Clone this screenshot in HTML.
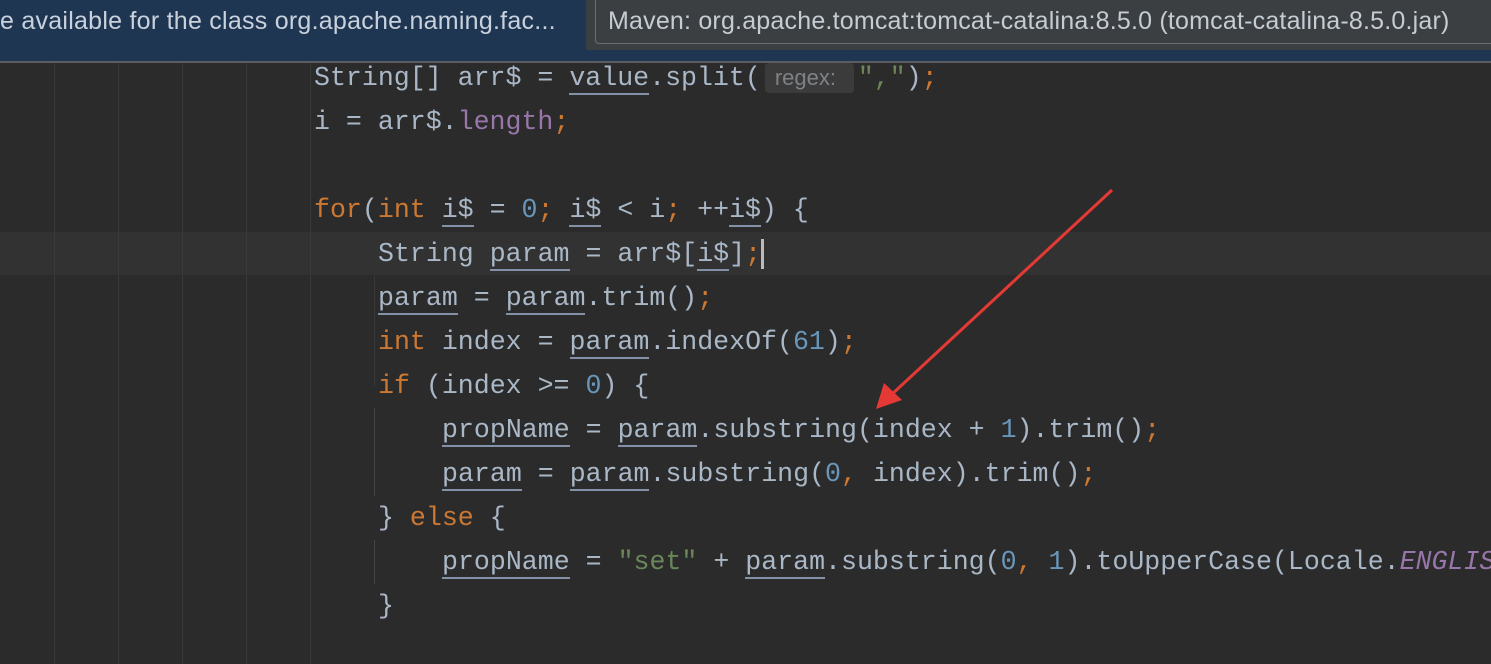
<!DOCTYPE html><html><head><style>
body{margin:0;width:1491px;height:664px;background:#2b2b2b;overflow:hidden;position:relative;font-family:"Liberation Mono",monospace}
.top{position:absolute;left:0;top:0;width:1491px;height:61px;background:#1f3653;border-bottom:2px solid #5a5d60}
.t1{position:absolute;left:0;top:7px;font:25px "Liberation Sans",sans-serif;color:#c9d2dc;white-space:nowrap;letter-spacing:0.25px}
.tip{position:absolute;left:586px;top:0;width:905px;height:50px;background:#3c3f41}
.tipb{position:absolute;left:595px;top:0;width:896px;height:43px;border:1px solid #6b6e70;border-top:none;border-right:none;border-radius:0 0 0 4px}
.t2{position:absolute;left:608px;top:7px;font:25px "Liberation Sans",sans-serif;color:#c4ccd4;white-space:nowrap;letter-spacing:0.2px}
.g{position:absolute;top:63px;bottom:0;width:1px;background:#393939}
.cur{position:absolute;left:0;top:232px;width:1491px;height:43px;background:#323232}
.l{position:absolute;font-size:26.6px;color:#a9b7c6;white-space:pre;line-height:44px;height:44px}
.k{color:#cc7832}.n{color:#6897bb}.s{color:#6a8759}.f{color:#9876aa}.fi{color:#9876aa;font-style:italic}
u{text-decoration:none;border-bottom:2px solid #8290a8;display:inline-block;line-height:30px}
.hint{background:#3b3b3b;color:#7e8287;font-family:"Liberation Sans",sans-serif;font-size:22px;border-radius:4px;padding:0 10px;margin:0 4px 0 4px;display:inline-block;line-height:30px;width:69px}
</style></head><body>
<div class="top"></div>
<div class="t1">e available for the class org.apache.naming.fac...</div>
<div class="tip"></div><div class="tipb"></div>
<div class="t2">Maven: org.apache.tomcat:tomcat-catalina:8.5.0 (tomcat-catalina-8.5.0.jar)</div>
<div class="cur"></div>
<div class="g" style="left:54px"></div><div class="g" style="left:118px"></div><div class="g" style="left:182px"></div><div class="g" style="left:246px"></div><div class="g" style="left:310px"></div>
<div class="g" style="left:374px;top:276px;bottom:auto;height:110px"></div>
<div class="g" style="left:374px;top:408px;bottom:auto;height:88px;background:#444"></div>
<div class="g" style="left:374px;top:540px;bottom:auto;height:44px;background:#444"></div>
<div class="l" style="left:314px;top:56px">String[] arr$ = <u>value</u>.split(<span class="hint">regex:</span><span class="s">","</span>)<span class="k">;</span></div>
<div class="l" style="left:314px;top:100px">i = arr$.<span class="f">length</span><span class="k">;</span></div>
<div class="l" style="left:314px;top:188px"><span class="k">for</span>(<span class="k">int</span> <u>i$</u> = <span class="n">0</span><span class="k">;</span> <u>i$</u> &lt; i<span class="k">;</span> ++<u>i$</u>) {</div>
<div class="l" style="left:378px;top:232px">String <u>param</u> = arr$[<u>i$</u>]<span class="k">;</span><span style="display:inline-block;width:3px;height:30px;background:#bbb;vertical-align:middle"></span></div>
<div class="l" style="left:378px;top:276px"><u>param</u> = <u>param</u>.trim()<span class="k">;</span></div>
<div class="l" style="left:378px;top:320px"><span class="k">int</span> index = <u>param</u>.indexOf(<span class="n">61</span>)<span class="k">;</span></div>
<div class="l" style="left:378px;top:364px"><span class="k">if</span> (index &gt;= <span class="n">0</span>) {</div>
<div class="l" style="left:442px;top:408px"><u>propName</u> = <u>param</u>.substring(index + <span class="n">1</span>).trim()<span class="k">;</span></div>
<div class="l" style="left:442px;top:452px"><u>param</u> = <u>param</u>.substring(<span class="n">0</span><span class="k">,</span> index).trim()<span class="k">;</span></div>
<div class="l" style="left:378px;top:496px">} <span class="k">else</span> {</div>
<div class="l" style="left:442px;top:540px"><u>propName</u> = <span class="s">"set"</span> + <u>param</u>.substring(<span class="n">0</span><span class="k">,</span> <span class="n">1</span>).toUpperCase(Locale.<span class="fi">ENGLISH</span></div>
<div class="l" style="left:378px;top:584px">}</div>
<svg style="position:absolute;left:0;top:0" width="1491" height="664">
<line x1="1112" y1="190" x2="890" y2="396" stroke="#e53935" stroke-width="3"/>
<polygon points="876,409 884,383 902,400" fill="#e53935"/>
</svg>
</body></html>
